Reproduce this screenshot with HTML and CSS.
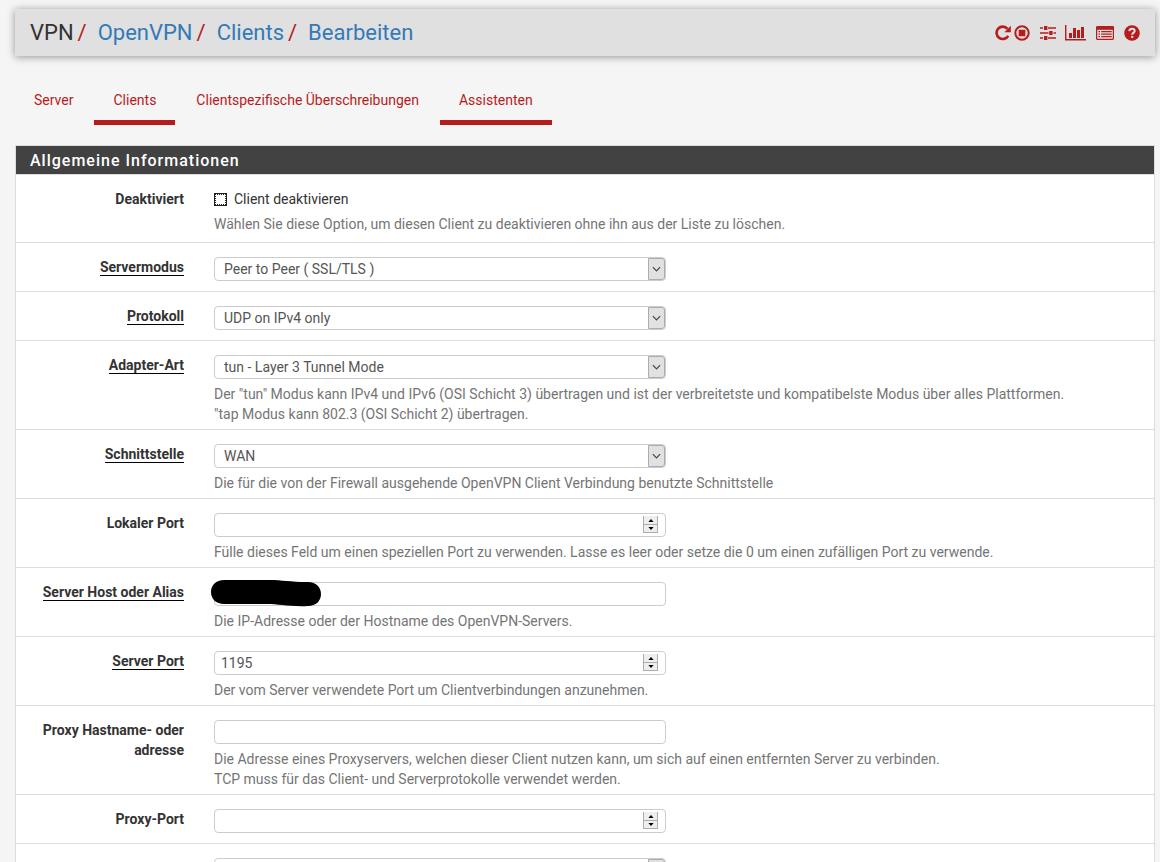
FILE: index.html
```html
<!DOCTYPE html>
<html lang="de">
<head>
<meta charset="utf-8">
<meta name="viewport" content="width=device-width, initial-scale=1">
<title>VPN: OpenVPN: Clients: Bearbeiten</title>
<link rel="stylesheet" href="styles.css">
</head>
<body>
<svg class="sprite" aria-hidden="true">
  <symbol id="chevron" viewBox="0 0 16 22"><path d="M4 9l4 4 4-4" fill="none" stroke="#444" stroke-width="1.3"/></symbol>
  <symbol id="up" viewBox="0 0 7 4"><path d="M0 4L3.500 0L7 4z"/></symbol>
  <symbol id="down" viewBox="0 0 7 4"><path d="M0 0L3.500 4L7 0z"/></symbol>
</svg>
<header class="header">
  <nav aria-label="Breadcrumb">
    <ol class="breadcrumb">
      <li>VPN</li>
      <li><a href="#">OpenVPN</a></li>
      <li><a href="#">Clients</a></li>
      <li><a href="#">Bearbeiten</a></li>
    </ol>
  </nav>
  <div class="actions">
    <a href="#" class="icon-redo" aria-label="Neustart"><svg width="16" height="16" viewBox="0 0 16 16"><path d="M13.200 10.800A6.200 6.200 0 1 1 12.500 3.800" fill="none" stroke="currentColor" stroke-width="2.600"/><path d="M15.800 .8v6.400H9.400z" fill="currentColor"/></svg></a>
    <a href="#" class="icon-stop" aria-label="Stopp"><svg width="16" height="16" viewBox="0 0 16 16"><circle cx="8" cy="8" r="6.700" fill="none" stroke="currentColor" stroke-width="2"/><rect x="4.700" y="4.700" width="6.600" height="6.600" rx=".6" fill="currentColor"/></svg></a>
    <a href="#" class="icon-sliders" aria-label="Einstellungen"><svg width="16" height="16" viewBox="0 0 16 16"><path d="M0 3h16M0 8h16M0 13h16" stroke="currentColor" stroke-width="1.400"/><path d="M3 .8h5v4.400H3zM8.500 5.800h5v4.400h-5zM3 10.800h5v4.400H3z" fill="#e0e0e0"/><path d="M4 1h3.400v4H4zM9.200 6h3.400v4H9.200zM4 11h3.400v4H4z" fill="currentColor"/></svg></a>
    <a href="#" class="icon-chart" aria-label="Status"><svg width="21" height="16" viewBox="0 0 21 16"><path d="M.7 0v14.800H21" fill="none" stroke="currentColor" stroke-width="1.400"/><path d="M4 8h3v5H4zM8 3h3v10H8zM12 5h3v8h-3zM16 2h3v11h-3z" fill="currentColor"/></svg></a>
    <a href="#" class="icon-list" aria-label="Protokolle"><svg width="18" height="16" viewBox="0 0 18 16"><rect x=".6" y="1.600" width="16.800" height="12.800" rx="1.200" fill="none" stroke="currentColor" stroke-width="1.300"/><path d="M0 1.500h18v3.300H0z" fill="currentColor"/><path d="M2.500 6.700H4M2.500 9.200H4M2.500 11.700H4M5.200 6.700h10.500M5.200 9.200h10.500M5.200 11.700h10.500" stroke="currentColor" stroke-width="1.300"/></svg></a>
    <a href="#" class="icon-help" aria-label="Hilfe"><svg width="16" height="16" viewBox="0 0 16 16"><circle cx="8" cy="8" r="7.800" fill="currentColor"/><path d="M5.300 6.100C5.500 4.300 6.600 3.700 8 3.700c1.600 0 2.700.9 2.700 2.200C10.700 7.600 8.200 7.700 8.200 9.700" fill="none" stroke="#e0e0e0" stroke-width="2"/><path d="M7.100 10.900h2.200v2H7.100z" fill="#e0e0e0"/></svg></a>
  </div>
</header>

<nav class="tabs" aria-label="OpenVPN">
  <a href="#">Server</a>
  <a href="#" class="active" aria-current="page">Clients</a>
  <a href="#">Clientspezifische Überschreibungen</a>
  <a href="#" class="active">Assistenten</a>
</nav>

<main>
<form class="panel">
  <h2 class="panel-title">Allgemeine Informationen</h2>

  <div class="row row-check">
    <span class="label">Deaktiviert</span>
    <div class="field">
      <label class="check"><input type="checkbox">Client deaktivieren</label>
      <p class="help">Wählen Sie diese Option, um diesen Client zu deaktivieren ohne ihn aus der Liste zu löschen.</p>
    </div>
  </div>

  <div class="row">
    <label class="label" for="mode"><span class="required">Servermodus</span></label>
    <div class="field">
      <div class="control"><select id="mode"><option>Peer to Peer ( SSL/TLS )</option></select><svg class="arrow"><use href="#chevron"/></svg></div>
    </div>
  </div>

  <div class="row">
    <label class="label" for="protocol"><span class="required">Protokoll</span></label>
    <div class="field">
      <div class="control"><select id="protocol"><option>UDP on IPv4 only</option></select><svg class="arrow"><use href="#chevron"/></svg></div>
    </div>
  </div>

  <div class="row">
    <label class="label" for="device"><span class="required">Adapter-Art</span></label>
    <div class="field">
      <div class="control"><select id="device"><option>tun - Layer 3 Tunnel Mode</option></select><svg class="arrow"><use href="#chevron"/></svg></div>
      <p class="help">Der "tun" Modus kann IPv4 und IPv6 (OSI Schicht 3) übertragen und ist der verbreitetste und kompatibelste Modus über alles Plattformen.<br>"tap Modus kann 802.3 (OSI Schicht 2) übertragen.</p>
    </div>
  </div>

  <div class="row">
    <label class="label" for="interface"><span class="required">Schnittstelle</span></label>
    <div class="field">
      <div class="control"><select id="interface"><option>WAN</option></select><svg class="arrow"><use href="#chevron"/></svg></div>
      <p class="help">Die für die von der Firewall ausgehende OpenVPN Client Verbindung benutzte Schnittstelle</p>
    </div>
  </div>

  <div class="row">
    <label class="label" for="local-port">Lokaler Port</label>
    <div class="field">
      <div class="control"><input type="number" id="local-port"><span class="spinner"><button type="button" aria-label="Erhöhen"><svg><use href="#up"/></svg></button><button type="button" aria-label="Verringern"><svg><use href="#down"/></svg></button></span></div>
      <p class="help">Fülle dieses Feld um einen speziellen Port zu verwenden. Lasse es leer oder setze die 0 um einen zufälligen Port zu verwende.</p>
    </div>
  </div>

  <div class="row">
    <label class="label" for="host"><span class="required">Server Host oder Alias</span></label>
    <div class="field">
      <div class="control"><input type="text" id="host"><svg class="redaction" viewBox="0 0 110 28" aria-hidden="true"><path d="M13 1H58C72 1 78 3 97 3C105 3 110 8 110 15C110 22 105 27 97 27C80 28 68 25 56 25H13C5 25 0 20 0 13C0 6 5 1 13 1z"/></svg></div>
      <p class="help">Die IP-Adresse oder der Hostname des OpenVPN-Servers.</p>
    </div>
  </div>

  <div class="row">
    <label class="label" for="server-port"><span class="required">Server Port</span></label>
    <div class="field">
      <div class="control"><input type="number" id="server-port" value="1195"><span class="spinner"><button type="button" aria-label="Erhöhen"><svg><use href="#up"/></svg></button><button type="button" aria-label="Verringern"><svg><use href="#down"/></svg></button></span></div>
      <p class="help">Der vom Server verwendete Port um Clientverbindungen anzunehmen.</p>
    </div>
  </div>

  <div class="row">
    <label class="label" for="proxy-host">Proxy Hastname- oder adresse</label>
    <div class="field">
      <div class="control"><input type="text" id="proxy-host"></div>
      <p class="help">Die Adresse eines Proxyservers, welchen dieser Client nutzen kann, um sich auf einen entfernten Server zu verbinden.<br>TCP muss für das Client- und Serverprotokolle verwendet werden.</p>
    </div>
  </div>

  <div class="row">
    <label class="label" for="proxy-port">Proxy-Port</label>
    <div class="field">
      <div class="control"><input type="number" id="proxy-port"><span class="spinner"><button type="button" aria-label="Erhöhen"><svg><use href="#up"/></svg></button><button type="button" aria-label="Verringern"><svg><use href="#down"/></svg></button></span></div>
    </div>
  </div>

  <div class="row">
    <span class="label"></span>
    <div class="field">
      <div class="control"><select aria-label="Proxy"><option></option></select><svg class="arrow"><use href="#chevron"/></svg></div>
    </div>
  </div>
</form>
</main>
</body>
</html>
```

FILE: styles.css
```css
* { box-sizing: border-box; }

html { scrollbar-width: none; }

body {
  margin: 0;
  padding: 9px 5px 0 15px;
  background: #f5f5f5;
  color: #333;
  font: 14px/20px Roboto, "Liberation Sans", sans-serif;
}

a { color: #337ab7; text-decoration: none; }

.sprite { display: none; }

.header {
  display: flex;
  align-items: center;
  justify-content: space-between;
  padding: 8px 15px;
  background: #e0e0e0;
  box-shadow: 0 1px 8px rgba(0, 0, 0, 0.4);
}

.breadcrumb {
  display: flex;
  margin: 0;
  padding: 0;
  list-style: none;
  font-size: 22px;
  line-height: 31px;
}

.breadcrumb li + li::before {
  content: "/";
  padding: 0 11px 0 4px;
  color: #b71c1c;
}

.actions { display: flex; align-items: center; }
.actions a { display: flex; margin-left: 10px; color: #b71c1c; }
.actions .icon-stop { margin-left: 3px; }
.actions .icon-chart { margin-left: 9px; }

.tabs { display: flex; gap: 2px; margin-top: 24px; }

.tabs a {
  padding: 10px 19px;
  border-bottom: 5px solid transparent;
  color: #b71c1c;
}

.tabs .active { border-bottom-color: #b71c1c; }

.panel {
  margin-top: 20px;
  border: 1px solid #ddd;
  background: #fff;
}

.panel-title {
  margin: 0;
  padding: 5px 14px 3px;
  background: #424242;
  color: #fff;
  font-size: 16px;
  font-weight: 500;
  line-height: 20px;
  letter-spacing: 1px;
}

.row {
  display: grid;
  grid-template-columns: 168px 1fr;
  column-gap: 30px;
  padding: 14px 15px 5px 0;
  border-top: 1px solid #ddd;
}

.row-check { padding-bottom: 8px; }

.label { padding-left: 20px; font-weight: bold; text-align: right; }

.required { border-bottom: 1px solid #000; }

.help { margin: 0; color: #757575; }

.check {
  display: flex;
  align-items: center;
  gap: 7px;
  margin-bottom: 5px;
}

.check input {
  width: 13px;
  height: 13px;
  margin: 0;
  border: 1px solid #222;
  outline: 1px dotted #222;
  outline-offset: -2px;
  background: #fff;
  appearance: none;
}

.check input:checked { background: #222; }

.control { position: relative; max-width: 452px; margin-bottom: 5px; }

.control select,
.control input {
  display: block;
  width: 100%;
  height: 24px;
  margin: 0;
  padding: 0 6px;
  border: 1px solid #ccc;
  border-radius: 4px;
  background: #fff;
  color: #555;
  font: inherit;
  appearance: none;
}

.control select { padding: 0 9px; }
.control input[type="number"] { appearance: textfield; }

.arrow {
  position: absolute;
  top: 1px;
  right: 1px;
  width: 17px;
  height: 22px;
  border: 1px solid #adadad;
  border-radius: 0 3px 3px 0;
  background: #e1e1e1;
  pointer-events: none;
}

.spinner {
  position: absolute;
  top: 3px;
  right: 8px;
  display: grid;
  grid-template-rows: 9px 8px;
  width: 15px;
}

.spinner button {
  display: flex;
  align-items: center;
  justify-content: center;
  padding: 0;
  border: 1px solid #adadad;
  border-top: 0;
  background: #eee;
}

.spinner svg { width: 6px; height: 3px; }

.redaction {
  position: absolute;
  top: -3px;
  left: -3px;
  width: 110px;
  height: 28px;
}
```
